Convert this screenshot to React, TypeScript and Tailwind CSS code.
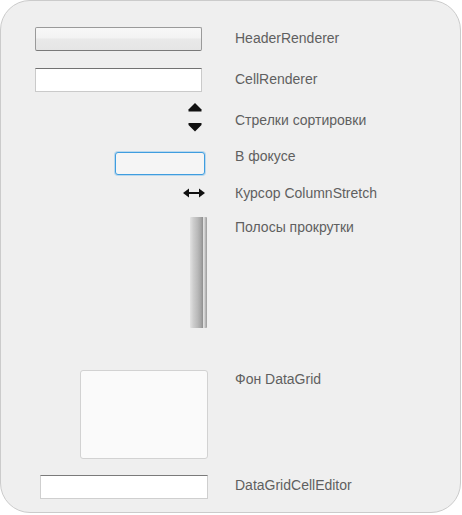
import React from "react";

function SortArrows() {
  return (
    <svg width="14" height="29" viewBox="0 0 14 29">
      <polygon points="7,0 13.5,6.5 13.5,8.5 0.5,8.5 0.5,6.5" fill="#111" />
      <polygon points="0.5,20 13.5,20 13.5,22 7,28.5 0.5,22" fill="#111" />
    </svg>
  );
}

function StretchCursor() {
  return (
    <svg width="22" height="10" viewBox="0 0 22 10">
      <line x1="3" y1="5" x2="19" y2="5" stroke="#111" strokeWidth="2" />
      <polygon points="0,5 6,0.5 6,9.5" fill="#111" />
      <polygon points="22,5 16,0.5 16,9.5" fill="#111" />
    </svg>
  );
}

function Label({ children }: { children: React.ReactNode }) {
  return <div className="text-[14px] leading-[16px] text-[#5f5f5f] whitespace-nowrap">{children}</div>;
}

export default function App() {
  return (
    <div className="w-[462px] h-[515px] bg-white font-['Liberation_Sans',Arial,sans-serif]">
      <div className="w-[461px] h-[513px] rounded-[30px] border border-[#cbcbcb] bg-[#efefef] pt-[26px] flex flex-col">
        {/* HeaderRenderer */}
        <div className="flex">
          <div className="w-[207px] flex justify-end pr-[6px]">
            <div className="w-[167px] h-[24px] rounded-[2px] border border-[#9a9a9a] border-b-[#7a7a7a] bg-[linear-gradient(to_bottom,#f8f8f8_0%,#f3f3f3_45%,#e9e9e9_50%,#e5e5e5_100%)]" />
          </div>
          <div className="ml-[27px] pt-[3px]">
            <Label>HeaderRenderer</Label>
          </div>
        </div>

        {/* CellRenderer */}
        <div className="flex mt-[17px]">
          <div className="w-[207px] flex justify-end pr-[6px]">
            <div className="w-[167px] h-[24px] bg-white border border-[#cacaca] border-t-[#727272]" />
          </div>
          <div className="ml-[27px] pt-[3px]">
            <Label>CellRenderer</Label>
          </div>
        </div>

        {/* Sort arrows */}
        <div className="flex mt-[11px]">
          <div className="w-[207px] flex justify-end pr-[6px]">
            <SortArrows />
          </div>
          <div className="ml-[27px] pt-[9px]">
            <Label>Стрелки сортировки</Label>
          </div>
        </div>

        {/* Focus */}
        <div className="flex mt-[16px]">
          <div className="w-[207px] flex justify-end pr-[3px] pt-[4px]">
            <div className="w-[90px] h-[23px] rounded-[3px] border border-[#3f9ddf] bg-[#f5f5f5] shadow-[0_0_0_1px_rgba(90,175,235,0.35)]" />
          </div>
          <div className="ml-[27px]">
            <Label>В фокусе</Label>
          </div>
        </div>

        {/* ColumnStretch cursor */}
        <div className="flex mt-[10px] h-[16px]">
          <div className="w-[207px] flex justify-end items-center pr-[3px]">
            <StretchCursor />
          </div>
          <div className="ml-[27px]">
            <Label>Курсор ColumnStretch</Label>
          </div>
        </div>

        {/* Scrollbar */}
        <div className="flex mt-[16px]">
          <div className="w-[207px] flex justify-end pr-[1px]">
            <div className="w-[17px] h-[111px] rounded-[1px] bg-[linear-gradient(to_right,#e2e2e2_0%,#cdcdcd_20%,#b9b9b9_45%,#a4a4a4_65%,#8e8e8e_76%,#ececec_80%,#c4c4c4_88%,#9a9a9a_100%)]" />
          </div>
          <div className="ml-[27px] pt-[2px]">
            <Label>Полосы прокрутки</Label>
          </div>
        </div>

        {/* DataGrid background */}
        <div className="flex mt-[42px]">
          <div className="w-[207px] flex justify-end">
            <div className="w-[128px] h-[89px] rounded-[3px] bg-[#fafafa] border border-[#d2d2d2]" />
          </div>
          <div className="ml-[27px] pt-[1px]">
            <Label>Фон DataGrid</Label>
          </div>
        </div>

        {/* DataGridCellEditor */}
        <div className="flex mt-[16px]">
          <div className="w-[207px] flex justify-end">
            <div className="w-[168px] h-[24px] bg-white border border-[#cfcfcf] border-t-[#7a7a7a]" />
          </div>
          <div className="ml-[27px] pt-[2px]">
            <Label>DataGridCellEditor</Label>
          </div>
        </div>
      </div>
    </div>
  );
}
